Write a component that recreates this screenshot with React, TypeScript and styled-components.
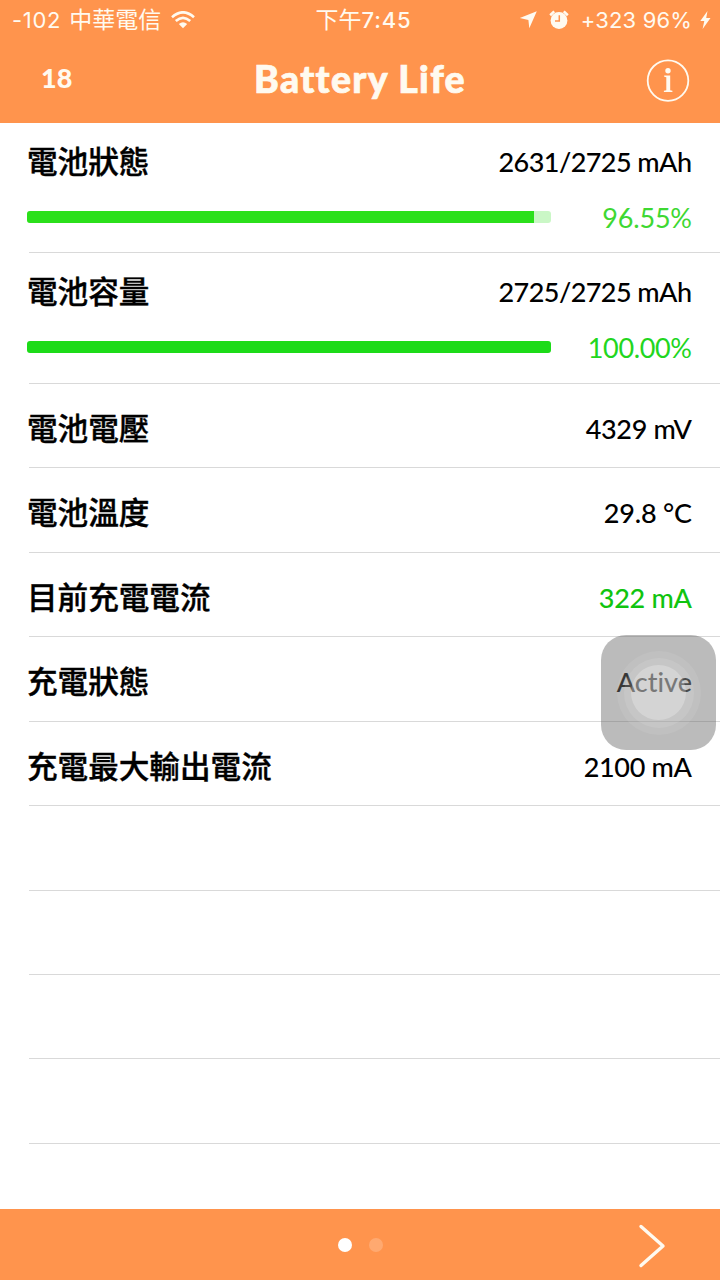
import React from 'react';
import styled, { createGlobalStyle } from 'styled-components';

const GlobalStyle = createGlobalStyle`
  * { box-sizing: border-box; }
  body { margin: 0; background: #fff; }
`;

const ORANGE = '#ff944d';

const Screen = styled.main`
  position: relative;
  display: flex;
  flex-direction: column;
  width: 720px;
  height: 1280px;
  overflow: hidden;
  background: #fff;
  color: #000;
  font-family: Lato, 'Noto Sans CJK TC', sans-serif;
  font-variant-ligatures: none;
`;

const Header = styled.header`
  height: 123px;
  flex: none;
  background: ${ORANGE};
  color: #fffaf0;
`;

const StatusBar = styled.div`
  display: grid;
  grid-template-columns: 1fr auto 1fr;
  align-items: center;
  height: 40px;
  padding: 0 9px 0 12px;
  font: 400 22px/40px Inter, 'Noto Sans CJK TC', sans-serif;
  white-space: nowrap;
`;

const StatusGroup = styled.div<{ $end?: boolean }>`
  display: flex;
  align-items: center;
  justify-content: ${(p) => (p.$end ? 'flex-end' : 'flex-start')};
`;

const StatusText = styled.span<{ $spacing?: number; $weight?: number }>`
  font-weight: ${(p) => p.$weight ?? 400};
  letter-spacing: ${(p) => p.$spacing ?? 0}px;
`;

const Carrier = styled(StatusText)`
  margin: 0 10px 0 8px;
  font-size: 23px;
`;

const Clock = styled.div`
  display: flex;
  margin-left: 4px;
`;

const ClockPeriod = styled(StatusText)`
  font-size: 23px;
`;

const NavBar = styled.div`
  display: grid;
  grid-template-columns: 1fr auto 1fr;
  align-items: center;
  height: 81px;
  padding: 0 30px;
`;

const Count = styled.span`
  margin: -6px 0 0 11px;
  font-size: 27px;
  font-weight: 900;
  line-height: 32px;
`;

const Title = styled.h1`
  margin: -3px 0 0;
  font-size: 37.5px;
  line-height: 44px;
  font-weight: 900;
  letter-spacing: 1.3px;
  -webkit-text-stroke: 0.7px currentColor;
`;

const InfoButton = styled.button`
  justify-self: end;
  display: flex;
  width: 44px;
  height: 44px;
  padding: 0;
  border: 0;
  background: none;
  color: inherit;
`;

const List = styled.section`
  flex: 1;
  padding-left: 29px;
`;

const Row = styled.div<{ $height: number }>`
  display: flow-root;
  height: ${(p) => p.$height}px;
  border-bottom: 1px solid #d9d9d9;
`;

const Line = styled.div<{ $top: number }>`
  display: flex;
  align-items: center;
  justify-content: space-between;
  height: 40px;
  margin: ${(p) => p.$top}px 28px 0 -2px;
`;

const Label = styled.span`
  margin-top: -4px;
  font: 500 30.6px/40px 'Noto Sans CJK TC', sans-serif;
  -webkit-text-stroke: 0.4px currentColor;
`;

const Value = styled.span<{ $color?: string; $spacing?: number }>`
  font-size: 27px;
  font-weight: 500;
  line-height: 40px;
  color: ${(p) => p.$color ?? '#000'};
  letter-spacing: ${(p) => p.$spacing ?? 0}px;
  margin-right: ${(p) => -(p.$spacing ?? 0)}px;
  white-space: pre;
`;

const Percent = styled(Value)`
  margin-top: 2px;
  font-weight: 400;
`;

const Track = styled.div<{ $color: string }>`
  width: 524px;
  height: 12px;
  border-radius: 3px;
  overflow: hidden;
  background: ${(p) => p.$color}40;
`;

const Fill = styled.div<{ $color: string }>`
  height: 100%;
  background: ${(p) => p.$color};
`;

const AssistiveTouch = styled.div`
  position: absolute;
  left: 601px;
  top: 635px;
  width: 115px;
  height: 115px;
  border-radius: 25px;
  background: rgba(94, 94, 94, 0.42);
  display: grid;
  place-items: center;
`;

const Ring = styled.div<{ $size: number; $alpha: number }>`
  grid-area: 1 / 1;
  width: ${(p) => p.$size}px;
  height: ${(p) => p.$size}px;
  border-radius: 50%;
  background: rgba(255, 255, 255, ${(p) => p.$alpha});
`;

const Footer = styled.footer`
  display: grid;
  grid-template-columns: 1fr auto 1fr;
  align-items: center;
  height: 71px;
  padding: 0 54px;
  background: ${ORANGE};
`;

const Dots = styled.div`
  grid-column: 2;
  display: flex;
  gap: 17px;
`;

const Dot = styled.i<{ $active?: boolean }>`
  width: 14px;
  height: 14px;
  border-radius: 50%;
  background: ${(p) => (p.$active ? '#fff' : 'rgba(255,255,255,.2)')};
`;

const Next = styled.svg`
  justify-self: end;
  margin-top: 2px;
`;

const WifiIcon = () => (
  <svg width="24" height="18" viewBox="0 0 24 18" fill="none" stroke="currentColor" strokeWidth="2.6">
    <path d="M1 6.2Q12-3.6 23 6.2M4.8 10.1Q12 3.8 19.2 10.1" />
    <path d="M7.8 13Q12 9.4 16.2 13L12 17.3Z" fill="currentColor" stroke="none" />
  </svg>
);

const LocationIcon = styled.svg`
  margin-right: 12px;
`;

const AlarmIcon = styled.svg`
  margin-right: 12px;
`;

const BoltIcon = styled.svg`
  margin-left: 8px;
`;

interface Reading {
  label: string;
  value: string;
  height: number;
  color?: string;
  spacing?: number;
  percent?: { text: string; amount: number; bar: string; color: string; spacing: number };
}

const readings: Reading[] = [
  { label: '電池狀態', value: '2631/2725 mAh', height: 130, spacing: -0.55, percent: { text: '96.55%', amount: 96.75, bar: '#2be01b', color: '#3ed832', spacing: -0.2 } },
  { label: '電池容量', value: '2725/2725 mAh', height: 131, spacing: -0.55, percent: { text: '100.00%', amount: 100, bar: '#1cdb18', color: '#22d61e', spacing: -0.35 } },
  { label: '電池電壓', value: '4329 mV', height: 84, spacing: -0.35 },
  { label: '電池溫度', value: '29.8 °C', height: 85, spacing: -0.2 },
  { label: '目前充電電流', value: '322 mA', height: 84, color: '#10c410', spacing: -0.25 },
  { label: '充電狀態', value: 'Active', height: 85, spacing: 0 },
  { label: '充電最大輸出電流', value: '2100 mA', height: 84, spacing: -0.3 },
];

const emptyRows = [85, 84, 84, 85];

export default function App() {
  return (
    <Screen>
      <GlobalStyle />
      <Header>
        <StatusBar>
          <StatusGroup>
            <StatusText $spacing={0.7}>-102</StatusText>
            <Carrier>中華電信</Carrier>
            <WifiIcon />
          </StatusGroup>
          <Clock>
            <ClockPeriod>下午</ClockPeriod>
            <StatusText $weight={500} $spacing={0.9}>7:45</StatusText>
          </Clock>
          <StatusGroup $end>
            <LocationIcon width="18" height="18" viewBox="0 0 18 18" fill="currentColor">
              <path d="M17.8.3 10.3 17.2 9.4 9 .8 7Z" />
            </LocationIcon>
            <AlarmIcon width="20" height="20" viewBox="0 0 20 20">
              <circle cx="10" cy="10.5" r="8.4" fill="currentColor" />
              <path d="M1.2 5.2 5.2 1.4M14.8 1.4l4 3.8" stroke="currentColor" strokeWidth="2.6" />
              <path d="M10.3 5.3v5.8H6" stroke={ORANGE} strokeWidth="1.5" fill="none" />
            </AlarmIcon>
            <StatusText $spacing={0.15}>+323 96%</StatusText>
            <BoltIcon width="11" height="18" viewBox="0 0 11 18" fill="currentColor">
              <path d="M7.5 0 .3 10h4L2.6 18 10.5 7H6.2Z" />
            </BoltIcon>
          </StatusGroup>
        </StatusBar>
        <NavBar>
          <Count>18</Count>
          <Title>Battery Life</Title>
          <InfoButton aria-label="Info">
            <svg width="44" height="44" viewBox="0 0 44 44">
              <circle cx="22" cy="21.6" r="20.3" fill="none" stroke="currentColor" strokeWidth="1.8" />
              <circle cx="22" cy="11.8" r="2.7" fill="currentColor" />
              <path d="M18.2 16.6h6V31.3l2.2.5v1.2h-8.5v-1.2l2.4-.5V18.3l-2.1-.5Z" fill="currentColor" />
            </svg>
          </InfoButton>
        </NavBar>
      </Header>
      <List>
        {readings.map((r) => (
          <Row key={r.label} $height={r.height}>
            <Line $top={r.percent ? 19 : 25}>
              <Label>{r.label}</Label>
              <Value $color={r.color} $spacing={r.spacing}>{r.value}</Value>
            </Line>
            {r.percent && (
              <Line $top={15}>
                <Track $color={r.percent.bar}>
                  <Fill $color={r.percent.bar} style={{ width: `${r.percent.amount}%` }} />
                </Track>
                <Percent $color={r.percent.color} $spacing={r.percent.spacing}>{r.percent.text}</Percent>
              </Line>
            )}
          </Row>
        ))}
        {emptyRows.map((h, i) => (
          <Row key={i} $height={h} />
        ))}
      </List>
      <Footer>
        <Dots>
          <Dot $active />
          <Dot />
        </Dots>
        <Next width="28" height="46" viewBox="0 0 28 46" fill="none" stroke="#fffaf0" strokeWidth="3.4" strokeLinecap="round" strokeLinejoin="round">
          <path d="M3 3.5 25 23 3 42.5" />
        </Next>
      </Footer>
      <AssistiveTouch>
        <Ring $size={84} $alpha={0.08} />
        <Ring $size={70} $alpha={0.1} />
        <Ring $size={55} $alpha={0.25} />
      </AssistiveTouch>
    </Screen>
  );
}
